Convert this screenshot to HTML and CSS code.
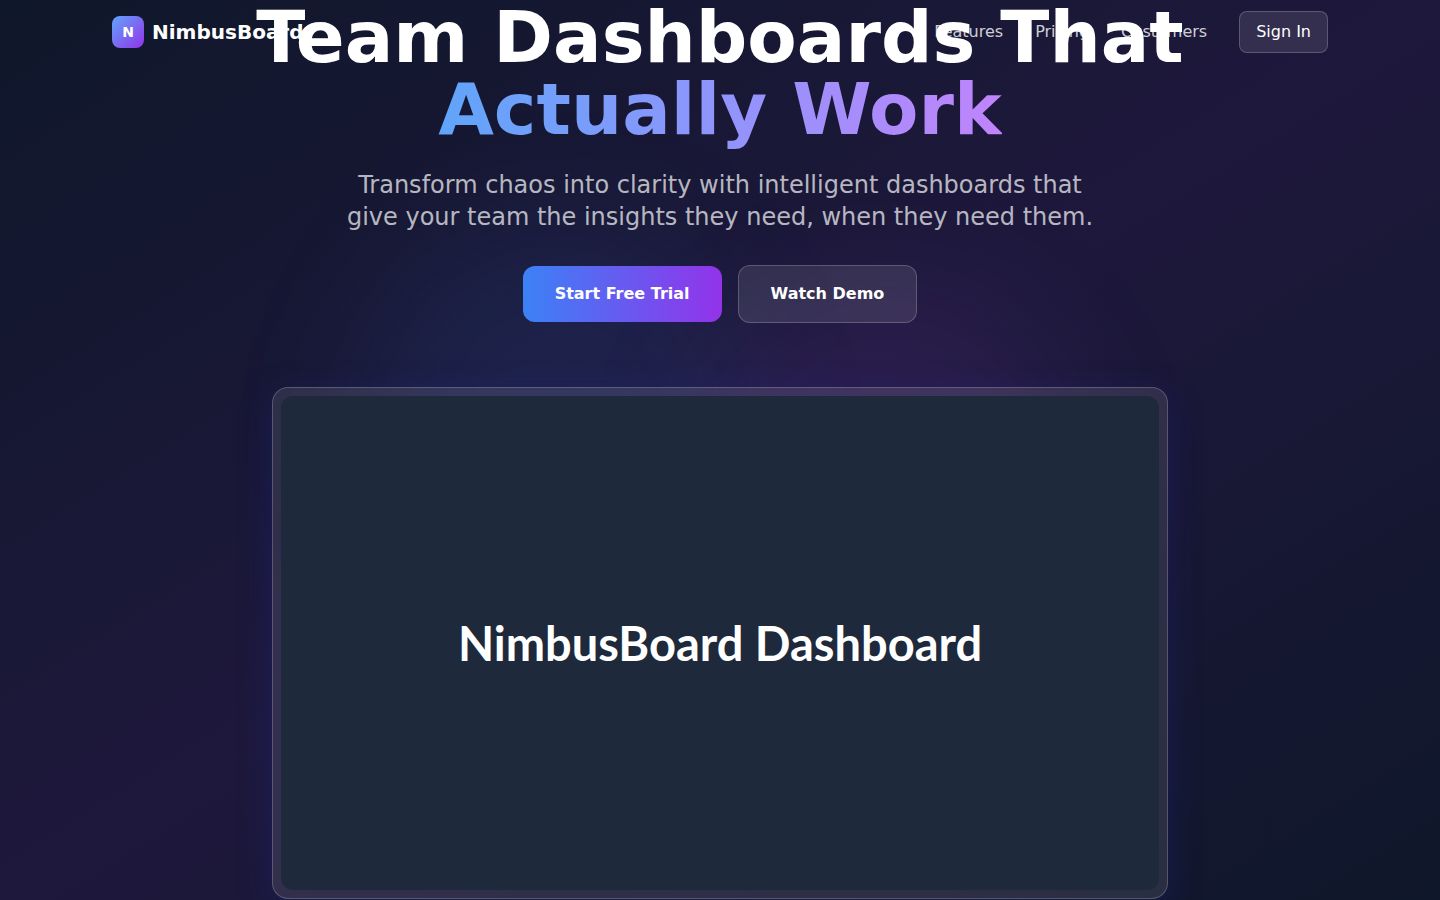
FILE: index.html
```html
<!DOCTYPE html>
<html lang="en">
<head>
<meta charset="utf-8">
<meta name="viewport" content="width=device-width, initial-scale=1">
<title>NimbusBoard</title>
<link rel="stylesheet" href="styles.css">
</head>
<body>
<div class="page">
  <header class="topbar">
    <div class="topbar-inner">
      <div class="brand">
        <span class="brand-mark">N</span>
        <span class="brand-name">NimbusBoard</span>
      </div>
      <nav class="nav">
        <a class="nav-link" href="#features">Features</a>
        <a class="nav-link" href="#pricing">Pricing</a>
        <a class="nav-link" href="#customers">Customers</a>
        <button class="sign-in" type="button">Sign In</button>
      </nav>
    </div>
  </header>
  <main class="hero">
    <div class="glow glow-blue"></div>
    <div class="glow glow-purple"></div>
    <div class="hero-content">
      <h1 class="title">Team Dashboards That<br><span class="title-accent">Actually Work</span></h1>
      <p class="lead">Transform chaos into clarity with intelligent dashboards that give your team the insights they need, when they need them.</p>
      <div class="actions">
        <button class="btn btn-primary" type="button">Start Free Trial</button>
        <button class="btn btn-glass" type="button">Watch Demo</button>
      </div>
      <div class="frame">
        <div class="preview">NimbusBoard Dashboard</div>
      </div>
    </div>
  </main>
</div>
</body>
</html>
```
FILE: styles.css
```css
* {
  box-sizing: border-box;
}

body {
  margin: 0;
  font-family: "DejaVu Sans", sans-serif;
  font-size: 16px;
  line-height: 24px;
  color: #fff;
  background: #0f172a;
}

button {
  font: inherit;
  color: inherit;
  cursor: pointer;
}

.page {
  height: 100vh;
  overflow: hidden;
  background: linear-gradient(to bottom right, #0f172a, #1e183c, #0f172a);
}

.topbar {
  position: absolute;
  top: 0;
  left: 0;
  right: 0;
}

.topbar-inner {
  display: flex;
  align-items: center;
  justify-content: space-between;
  max-width: 1280px;
  height: 64px;
  margin: 0 auto;
  padding: 0 32px;
}

.brand {
  display: flex;
  align-items: center;
  gap: 8px;
}

.brand-mark {
  display: flex;
  align-items: center;
  justify-content: center;
  width: 32px;
  height: 32px;
  border-radius: 8px;
  background: linear-gradient(to bottom right, #60a5fa, #9333ea);
  font-size: 14px;
  font-weight: 700;
}

.brand-name {
  font-size: 20px;
  font-weight: 700;
}

.nav {
  display: flex;
  align-items: center;
  gap: 32px;
}

.nav-link {
  color: rgba(255, 255, 255, 0.8);
  text-decoration: none;
}

.sign-in {
  padding: 8px 16px;
  border: 1px solid rgba(255, 255, 255, 0.2);
  border-radius: 8px;
  background: rgba(255, 255, 255, 0.1);
}

.hero {
  position: relative;
  height: 100%;
}

.glow {
  position: absolute;
  width: 384px;
  height: 384px;
  border-radius: 50%;
  filter: blur(64px);
}

.glow-blue {
  top: 25%;
  left: 25%;
  background: rgba(59, 130, 246, 0.1);
}

.glow-purple {
  right: 25%;
  bottom: 25%;
  background: rgba(168, 85, 247, 0.1);
}

.hero-content {
  position: relative;
  display: flex;
  flex-direction: column;
  align-items: center;
  max-width: 1024px;
  margin: 0 auto;
  padding: 1px 32px 0;
  text-align: center;
}

.title {
  margin: 0 0 24px;
  font-size: 72px;
  line-height: 72px;
  font-weight: 700;
}

.title-accent {
  background: linear-gradient(to right, #60a5fa, #c084fc);
  background-clip: text;
  -webkit-background-clip: text;
  color: transparent;
}

.lead {
  max-width: 768px;
  margin: 0 0 32px;
  font-size: 24px;
  line-height: 32px;
  color: rgba(255, 255, 255, 0.7);
}

.actions {
  display: flex;
  align-items: center;
  gap: 16px;
  margin-bottom: 64px;
}

.btn {
  padding: 16px 32px;
  border: 0;
  border-radius: 12px;
  font-weight: 600;
}

.btn-primary {
  background: linear-gradient(to right, #3b82f6, #9333ea);
}

.btn-glass {
  border: 1px solid rgba(255, 255, 255, 0.2);
  background: rgba(255, 255, 255, 0.1);
}

.frame {
  width: 100%;
  max-width: 896px;
  padding: 8px;
  border: 1px solid rgba(255, 255, 255, 0.2);
  border-radius: 16px;
  background: rgba(255, 255, 255, 0.1);
  box-shadow: 0 8px 32px rgba(31, 38, 135, 0.37);
}

.preview {
  display: flex;
  align-items: center;
  justify-content: center;
  aspect-ratio: 16 / 9;
  border-radius: 12px;
  background: #1e293b;
  font-family: Lato, sans-serif;
  font-size: 47px;
  line-height: 48px;
  font-weight: 700;
}
```
